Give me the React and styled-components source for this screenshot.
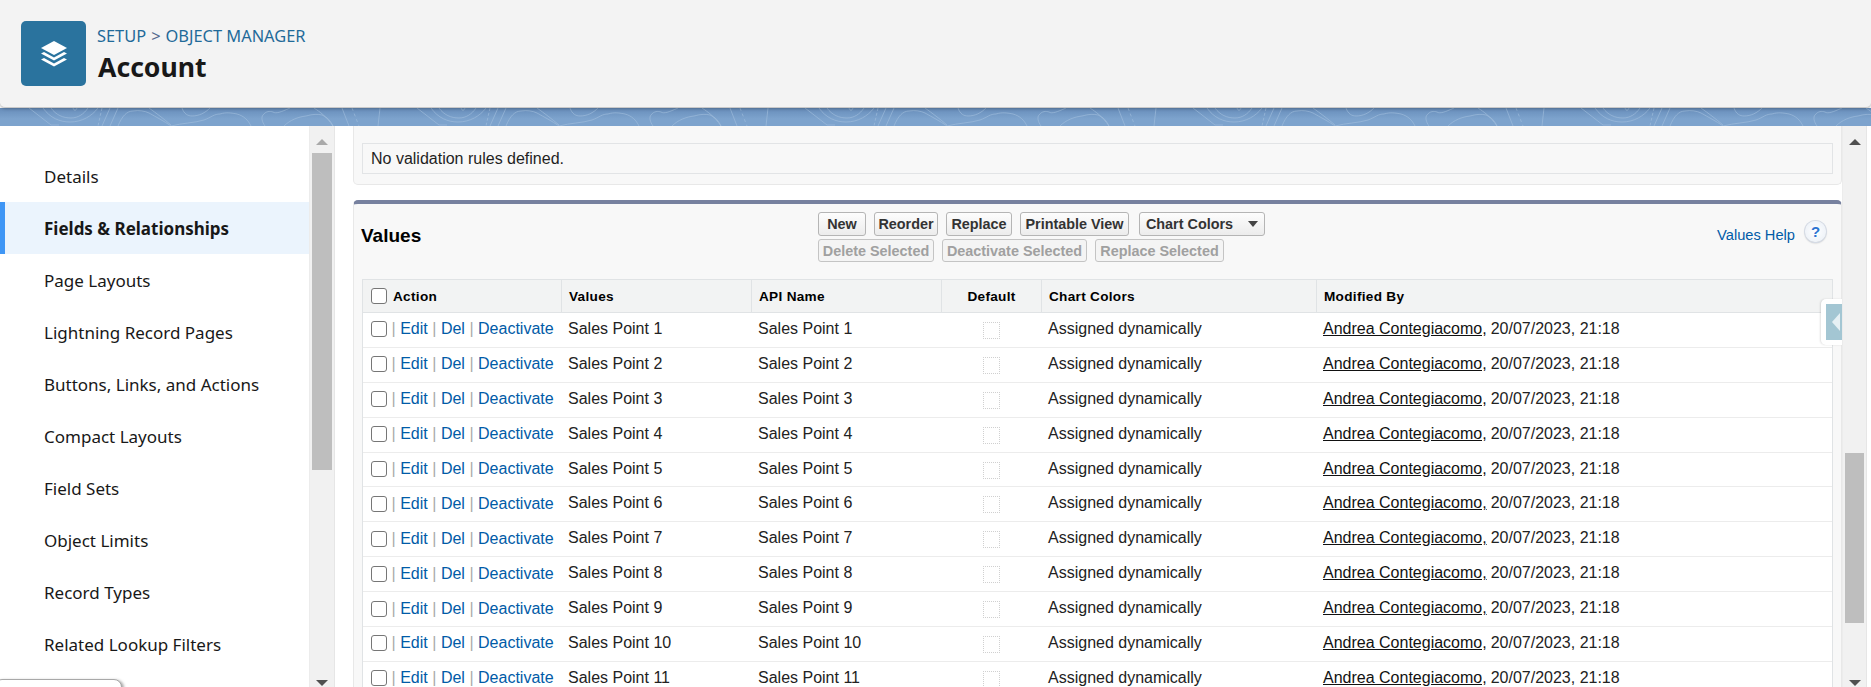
import React from 'react'
import styled, { createGlobalStyle } from 'styled-components'

const GlobalStyle = createGlobalStyle`
  html, body {
    margin: 0;
    height: 100%;
    background: white;
    overflow: hidden;
  }
`

const Page = styled.div`
  position: relative;
  display: flex;
  flex-direction: column;
  height: 687px;
  overflow: hidden;
  font-family: "Liberation Sans", Arial, sans-serif;
  color: #1f1f1f;
`

const Header = styled.header`
  position: relative;
  z-index: 2;
  display: flex;
  align-items: flex-start;
  gap: 11px;
  height: 108px;
  box-sizing: border-box;
  padding: 21px 21px 0;
  background: #f3f3f3;
  border-bottom: 1px solid #c9c9c9;
  border-radius: 0 0 5px 5px;
  box-shadow: 0 1px 3px rgba(0, 0, 0, 0.25);
`

const ObjectIcon = styled.div`
  display: flex;
  align-items: center;
  justify-content: center;
  width: 65px;
  height: 65px;
  border-radius: 5px;
  background: #2a739e;
`

const Titles = styled.div`
  display: flex;
  flex-direction: column;
  font-family: "Noto Sans", sans-serif;
`

const Crumbs = styled.div`
  margin-top: 4px;
  font-size: 16.4px;
  line-height: 22px;
  color: #1f6a99;

  span {
    color: #54698d;
    margin: 0 5px;
  }
`

const Title = styled.h1`
  margin: 2px 0 0 1px;
  font-size: 26.6px;
  line-height: 36px;
  font-weight: 700;
  color: #181818;
`

const Strip = styled.div`
  position: relative;
  height: 18px;
  flex: none;
  overflow: hidden;
  background: linear-gradient(#678dba, #7da3cd 60%);

  svg {
    position: absolute;
    left: 0;
    top: 0;
  }
`

const Body = styled.div`
  flex: 1;
  display: flex;
  min-height: 0;
  background: white;
`

const Sidebar = styled.nav`
  width: 309px;
  flex: none;
  box-sizing: border-box;
  padding-top: 24px;
  border-radius: 5px 0 0 0;
  font-family: "Noto Sans", sans-serif;
  font-size: 17px;
`

const NavItem = styled.div`
  height: 52px;
  display: flex;
  align-items: center;
  padding-left: 44px;
  box-sizing: border-box;
  color: #181818;
  font-weight: ${({ $active }) => $active ? 700 : 400};
  background: ${({ $active }) => $active ? '#ebf4fd' : 'white'};
  box-shadow: ${({ $active }) => $active ? 'inset 5px 0 0 #3f96f5' : 'none'};
`

const ScrollTrack = styled.div`
  position: relative;
  width: ${({ $width }) => $width}px;
  flex: none;
  box-sizing: border-box;
  padding: 0 2px;
  background: #f1f1f1;
  border-left: 1px solid #ececec;
  border-right: 1px solid #e6e6e6;
`

const ScrollThumb = styled.div`
  margin-top: ${({ $top }) => $top}px;
  height: ${({ $height }) => $height}px;
  background: #bebebe;
`

const ScrollArrow = styled.i`
  position: absolute;
  left: 6px;
  width: 0;
  height: 0;
  border-left: 6px solid transparent;
  border-right: 6px solid transparent;
  ${({ $down, $color }) => $down
    ? `bottom: 1px; border-top: 6px solid ${$color};`
    : `top: 13px; border-bottom: 6px solid ${$color};`}
`

const Main = styled.main`
  flex: 1;
  min-width: 0;
  overflow: hidden;
  padding-left: 18px;
`

const EdgeGap = styled.div`
  width: 4px;
  flex: none;
`

const Panel = styled.section`
  box-sizing: border-box;
  background: #f8f8f8;
  border: 1px solid #e8e8e8;
  border-radius: ${({ $top }) => $top ? '0 0 5px 5px' : '5px 5px 0 0'};
  border-top: ${({ $top }) => $top ? 'none' : '4px solid #77819f'};
  padding: ${({ $top }) => $top ? '17px 8px 10px' : '0 8px'};
  margin-bottom: 15px;
`

const Message = styled.div`
  height: 31px;
  box-sizing: border-box;
  padding-left: 8px;
  display: flex;
  align-items: center;
  background: #f8f8f8;
  border: 1px solid #e2e4e6;
  font-size: 16px;
`

const PanelHead = styled.div`
  display: grid;
  grid-template-columns: 456px auto 1fr;
  height: 75px;
`

const PanelTitle = styled.h2`
  margin: 0 0 0 -1px;
  padding-top: 20px;
  font-size: 19px;
  line-height: 24px;
  font-weight: 700;
  color: #000;
`

const ButtonGroup = styled.div`
  padding-top: 8px;
  display: flex;
  flex-direction: column;
  gap: 3px;
`

const ButtonRow = styled.div`
  display: flex;
  gap: 8px;
`

const Btn = styled.button`
  height: ${({ disabled }) => disabled ? 23 : 24}px;
  width: ${({ $w }) => $w}px;
  margin-left: ${({ $gap }) => $gap || 0}px;
  padding: 0;
  box-sizing: border-box;
  display: flex;
  align-items: center;
  justify-content: center;
  gap: 15px;
  font-family: "Liberation Sans", Arial, sans-serif;
  font-size: 14.4px;
  font-weight: 700;
  color: ${({ disabled }) => disabled ? '#a0a0a0' : '#333'};
  background: ${({ disabled }) => disabled ? '#f4f4f4' : 'linear-gradient(#fdfdfd, #ececec)'};
  border: 1px solid ${({ disabled }) => disabled ? '#c4c4c4' : '#b5b5b5'};
  border-radius: 3px;
`

const Caret = styled.i`
  width: 0;
  height: 0;
  border-left: 5px solid transparent;
  border-right: 5px solid transparent;
  border-top: 6px solid #444;
`

const HelpBox = styled.div`
  display: flex;
  justify-content: flex-end;
  align-items: flex-start;
  gap: 10px;
  padding: 17px 7px 0 0;
`

const HelpLink = styled.a`
  margin-top: 6px;
  font-size: 14.67px;
  color: #015ba7;
`

const HelpIcon = styled.span`
  width: 21px;
  height: 21px;
  border-radius: 50%;
  display: flex;
  align-items: center;
  justify-content: center;
  font-size: 15px;
  font-weight: 700;
  color: #2a74d2;
  background: radial-gradient(#fff, #e8eef6);
  box-shadow: 0 0 0 1px #d5dbe5, 0 1px 2px rgba(0, 0, 0, 0.3);
`

const Table = styled.div`
  border: 1px solid #e0e3e5;
  border-bottom: none;
  background: white;
`

const columns = '198px 190px 190px 100px 275px 1fr'

const HeadRow = styled.div`
  display: grid;
  grid-template-columns: ${columns};
  height: 32px;
  background: #f2f3f3;
  border-bottom: 1px solid #e0e3e5;
`

const HeadCell = styled.div`
  display: flex;
  align-items: center;
  gap: 6px;
  padding-left: ${({ $first, $center }) => $first ? 8 : $center ? 0 : 7}px;
  justify-content: ${({ $center }) => $center ? 'center' : 'flex-start'};
  font-size: 13.6px;
  font-weight: 700;
  letter-spacing: 0.3px;
  color: #000;
  border-left: ${({ $first }) => $first ? 'none' : '1px solid #e0e3e5'};
`

const Row = styled.div`
  display: grid;
  grid-template-columns: ${columns};
  height: 34.9px;
  box-sizing: border-box;
  border-bottom: 1px solid #ececec;
  font-size: 16px;
  color: #222;
`

const Cell = styled.div`
  display: flex;
  align-items: center;
  padding-left: ${({ $center }) => $center ? 0 : 7}px;
  padding-bottom: 2px;
  white-space: nowrap;
  justify-content: ${({ $center }) => $center ? 'center' : 'flex-start'};
`

const ActionCell = styled(Cell)`
  padding: 0 0 1px 8px;
  color: #aaa;
`

const CheckBox = styled.input.attrs({ type: 'checkbox' })`
  appearance: none;
  width: 16px;
  height: 16px;
  margin: 0;
  box-sizing: border-box;
  background: white;
  border: 1.5px solid #767676;
  border-radius: 3px;
  flex: none;
`

const ReadOnlyBox = styled.span`
  width: 17px;
  height: 17px;
  margin-top: 3px;
  box-sizing: border-box;
  border: 1px dotted #d0d0d0;
`

const RowLink = styled.a`
  color: #015ba7;
`

const Sep = styled.span`
  margin: 0 4.5px;
`

const UserLink = styled.a`
  color: #111;
  text-decoration: underline;
  margin-right: 4px;
`

const Toggle = styled.div`
  position: absolute;
  left: 1821px;
  top: 299px;
  width: 21px;
  height: 46px;
  box-sizing: border-box;
  padding: 5px 0 5px 5px;
  background: white;
  border-radius: 5px 0 0 5px;
  box-shadow: -1px 0 2px rgba(0, 0, 0, 0.12);
`

const ToggleInner = styled.div`
  height: 100%;
  display: flex;
  align-items: center;
  justify-content: flex-end;
  padding-right: 2px;
  box-sizing: border-box;
  background: #a3c6d3;

  i {
    width: 0;
    height: 0;
    border-top: 9px solid transparent;
    border-bottom: 9px solid transparent;
    border-right: 8px solid #e6f0f4;
  }
`

const DockTab = styled.div`
  position: absolute;
  left: -6px;
  top: 679px;
  width: 126px;
  height: 20px;
  background: white;
  border: 1px solid #a8a8a8;
  border-radius: 8px;
  box-shadow: 2px 1px 3px rgba(0, 0, 0, 0.35);
`

const navItems = [
  'Details',
  'Fields & Relationships',
  'Page Layouts',
  'Lightning Record Pages',
  'Buttons, Links, and Actions',
  'Compact Layouts',
  'Field Sets',
  'Object Limits',
  'Record Types',
  'Related Lookup Filters',
]

const salesPoints = Array.from({ length: 11 }, (_, i) => `Sales Point ${i + 1}`)

const StackIcon = () => (
  <svg width="28" height="28" viewBox="0 0 28 28" fill="white">
    <path d="M14 1 L27 8 L14 15 L1 8 Z" />
    <path d="M4 12 L14 17.4 L24 12 L27 13.6 L14 20.6 L1 13.6 Z" />
    <path d="M4 18 L14 23.4 L24 18 L27 19.6 L14 26.6 L1 19.6 Z" />
  </svg>
)

// one tile of the topographic lines in the strip, it repeats every 388px
const Contours = () => (
  <svg width="1871" height="18" viewBox="0 0 1871 18" fill="none" stroke="#a3c0de" strokeOpacity="0.6">
    {[-388, 0, 388, 776, 1164, 1552].map((x) => (
      <g key={x} transform={`translate(${x} 0)`}>
        <path d="M29 0 L51 17 L59 17" />
        <path d="M43 0 C50 10 60 14 70 14 C82 14 92 8 98 0" />
        <path d="M51 0 C56 7 63 10 71 10 C78 10 84 6 88 0" />
        <path d="M73 0 C74 3 76 3 77 0" />
        <path d="M102 0 L98 18" strokeDasharray="3 2" />
        <path d="M110 0 L102 18" />
        <path d="M118 0 L110 18" />
        <path d="M118 18 C122 8 127 3 133 3 C139 2 145 3 149 5 C156 9 164 13 171 18" />
        <path d="M149 0 C156 5 164 11 171 17" />
        <path d="M182 0 C184 6 188 8 192 8 C199 8 205 5 210 0" />
        <path d="M171 18 C182 15 194 15 204 12 C212 9 214 6 220 6 C226 4 232 5 237 6 C244 8 248 12 251 18" />
        <path d="M265 18 C262 14 261 9 263 7 C266 3 270 3 273 4 C276 6 281 4 290 0" />
        <path d="M284 18 C290 12 298 9 306 8 C313 6 318 6 322 7 C327 9 331 13 333 18" />
        <path d="M314 0 C320 4 326 8 333 18" />
        <path d="M342 0 L349 18" />
        <path d="M352 0 L359 18" strokeDasharray="3 3" />
        <path d="M380 0 L378 18" />
      </g>
    ))}
  </svg>
)

const App = () => (
  <Page>
    <GlobalStyle />
    <Header>
      <ObjectIcon><StackIcon /></ObjectIcon>
      <Titles>
        <Crumbs>SETUP<span>&gt;</span>OBJECT MANAGER</Crumbs>
        <Title>Account</Title>
      </Titles>
    </Header>
    <Strip><Contours /></Strip>
    <Body>
      <Sidebar>
        {navItems.map((item) => (
          <NavItem key={item} $active={item === 'Fields & Relationships'}>{item}</NavItem>
        ))}
      </Sidebar>
      <ScrollTrack $width={26}>
        <ScrollArrow $color="#a9a9a9" />
        <ScrollThumb $top={27} $height={317} />
        <ScrollArrow $down $color="#505050" />
      </ScrollTrack>
      <Main>
        <Panel $top>
          <Message>No validation rules defined.</Message>
        </Panel>
        <Panel>
          <PanelHead>
            <PanelTitle>Values</PanelTitle>
            <ButtonGroup>
              <ButtonRow>
                <Btn $w={48}>New</Btn>
                <Btn $w={64}>Reorder</Btn>
                <Btn $w={66}>Replace</Btn>
                <Btn $w={109}>Printable View</Btn>
                <Btn $w={126} $gap={2}>Chart Colors <Caret /></Btn>
              </ButtonRow>
              <ButtonRow>
                <Btn $w={116} disabled>Delete Selected</Btn>
                <Btn $w={145} disabled>Deactivate Selected</Btn>
                <Btn $w={129} disabled>Replace Selected</Btn>
              </ButtonRow>
            </ButtonGroup>
            <HelpBox>
              <HelpLink>Values Help</HelpLink>
              <HelpIcon>?</HelpIcon>
            </HelpBox>
          </PanelHead>
          <Table>
            <HeadRow>
              <HeadCell $first><CheckBox />Action</HeadCell>
              <HeadCell>Values</HeadCell>
              <HeadCell>API Name</HeadCell>
              <HeadCell $center>Default</HeadCell>
              <HeadCell>Chart Colors</HeadCell>
              <HeadCell>Modified By</HeadCell>
            </HeadRow>
            {salesPoints.map((name) => (
              <Row key={name}>
                <ActionCell>
                  <CheckBox />
                  <Sep>|</Sep><RowLink>Edit</RowLink>
                  <Sep>|</Sep><RowLink>Del</RowLink>
                  <Sep>|</Sep><RowLink>Deactivate</RowLink>
                </ActionCell>
                <Cell>{name}</Cell>
                <Cell>{name}</Cell>
                <Cell $center><ReadOnlyBox /></Cell>
                <Cell>Assigned dynamically</Cell>
                <Cell><UserLink>Andrea Contegiacomo,</UserLink>20/07/2023, 21:18</Cell>
              </Row>
            ))}
          </Table>
        </Panel>
      </Main>
      <ScrollTrack $width={25}>
        <ScrollArrow $color="#505050" />
        <ScrollThumb $top={327} $height={170} />
        <ScrollArrow $down $color="#505050" />
      </ScrollTrack>
      <EdgeGap />
    </Body>
    <Toggle><ToggleInner><i /></ToggleInner></Toggle>
    <DockTab />
  </Page>
)

export default App
